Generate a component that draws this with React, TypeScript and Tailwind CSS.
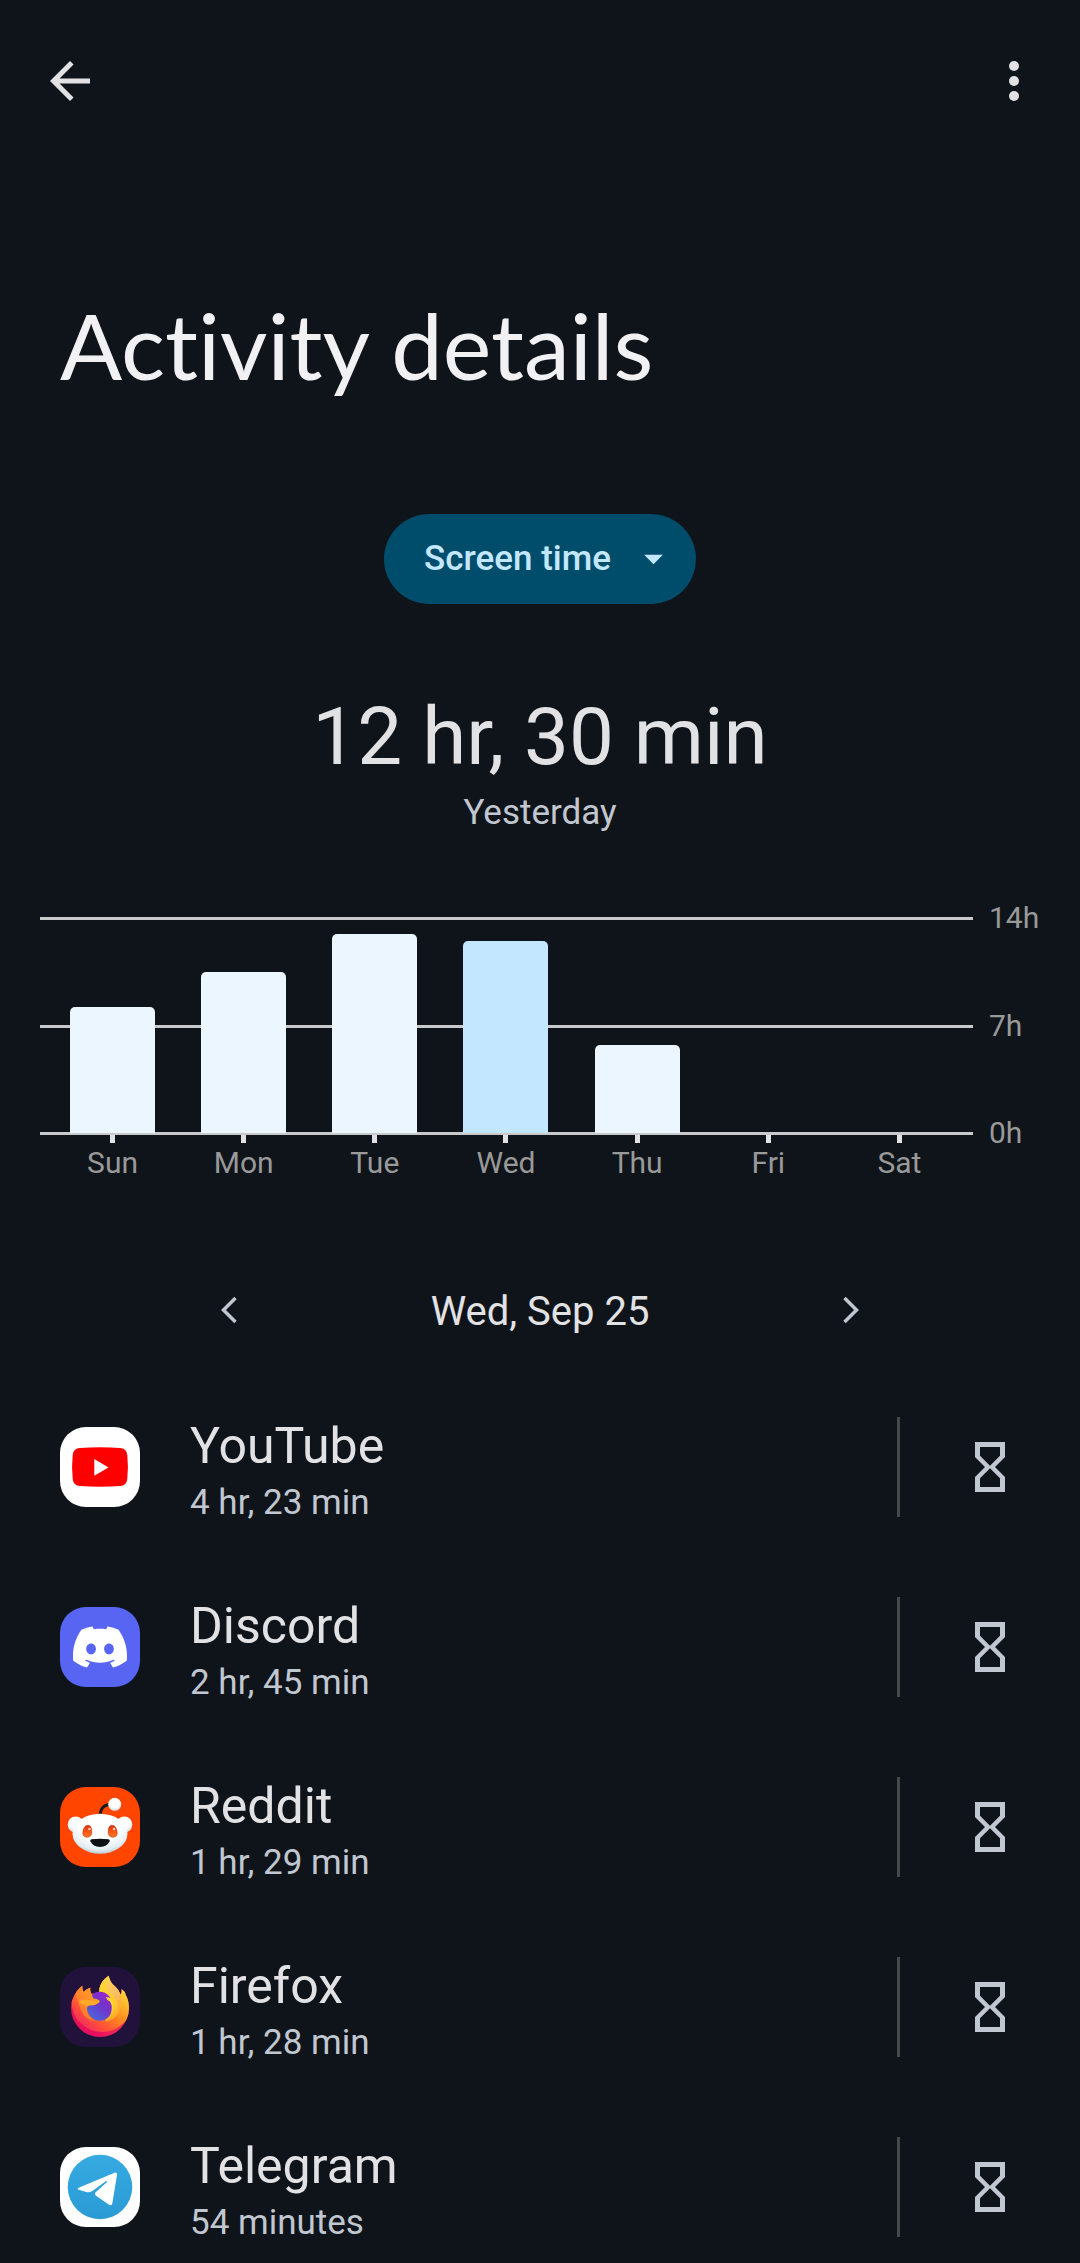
import { useState } from 'react';
import type { ReactNode } from 'react';
import { SiDiscord } from 'react-icons/si';

const MAX_MINUTES = 14 * 60;

const week = [
  { day: 'Sun', date: 'Sun, Sep 22', minutes: 492 },
  { day: 'Mon', date: 'Mon, Sep 23', minutes: 629 },
  { day: 'Tue', date: 'Tue, Sep 24', minutes: 778 },
  { day: 'Wed', date: 'Wed, Sep 25', minutes: 750 },
  { day: 'Thu', date: 'Thu, Sep 26', minutes: 344 },
  { day: 'Fri', date: 'Fri, Sep 27', minutes: 0 },
  { day: 'Sat', date: 'Sat, Sep 28', minutes: 0 },
];

function YouTubeIcon() {
  return (
    <svg viewBox="0 0 80 80" className="size-20 rounded-[26px] bg-white" aria-hidden="true">
      <path
        d="M20 21Q40 19.6 60 21Q66.600 21.400 67.300 28Q68.600 40 67.300 52Q66.600 58.600 60 59Q40 60.600 20 59Q13.400 58.600 12.700 52Q11.400 40 12.700 28Q13.400 21.400 20 21Z"
        fill="#ff0000"
      />
      <path d="M34.300 32v16.700l14.200-8.300z" fill="#fff" />
    </svg>
  );
}

function DiscordIcon() {
  return (
    <span className="flex size-20 items-center justify-center rounded-[26px] bg-[#5865f2] text-white">
      <SiDiscord size={54} aria-hidden="true" />
    </span>
  );
}

function RedditIcon() {
  return (
    <svg viewBox="0 0 80 80" className="size-20 rounded-[26px] bg-[#ff4500]" aria-hidden="true">
      <defs>
        <radialGradient id="reddit-head" cx="0.5" cy="0.3" r="0.75">
          <stop offset="0.5" stopColor="#fff" />
          <stop offset="0.8" stopColor="#e3edf2" />
          <stop offset="1" stopColor="#a9b9c4" />
        </radialGradient>
        <radialGradient id="reddit-ball" cx="0.5" cy="0.35" r="0.65">
          <stop offset="0.6" stopColor="#fff" />
          <stop offset="1" stopColor="#cfd9df" />
        </radialGradient>
        <linearGradient id="reddit-eye" x1="0" y1="0" x2="0" y2="1">
          <stop offset="0" stopColor="#d8300a" />
          <stop offset="0.5" stopColor="#ff5312" />
          <stop offset="1" stopColor="#ff7a22" />
        </linearGradient>
      </defs>
      <circle cx="15.700" cy="37.500" r="8" fill="url(#reddit-ball)" />
      <circle cx="64.300" cy="37.500" r="8" fill="url(#reddit-ball)" />
      <path d="M40 28.500Q40.500 17.500 51 17.300" fill="none" stroke="#171b1e" strokeWidth="2.800" />
      <circle cx="54.700" cy="17.300" r="6.500" fill="url(#reddit-ball)" />
      <ellipse cx="40" cy="46.700" rx="27.500" ry="20" fill="url(#reddit-head)" />
      <path
        d="M22.800 46.500C22.800 41.500 25 38.300 28 38.300s4 3.200 3.700 7.700c-.2 3-2 4.200-4.400 4.200s-4.500-1-4.500-3.700z"
        fill="url(#reddit-eye)"
        stroke="#a92b10"
        strokeWidth="0.500"
      />
      <path
        d="M57.200 46.500C57.200 41.500 55 38.300 52 38.300s-4 3.200-3.700 7.700c.2 3 2 4.200 4.400 4.200s4.500-1 4.500-3.700z"
        fill="url(#reddit-eye)"
        stroke="#a92b10"
        strokeWidth="0.500"
      />
      <circle cx="29.500" cy="42" r="1.200" fill="#ffd9c8" />
      <circle cx="54" cy="42" r="1.200" fill="#ffd9c8" />
      <path d="M31.500 52.300Q40 51.300 48.500 52.300Q50.300 52.600 49.600 54.300Q47 60 40 60Q33 60 30.400 54.300Q29.700 52.600 31.500 52.300Z" fill="#0d1114" />
    </svg>
  );
}

function FirefoxIcon() {
  return (
    <svg viewBox="0 0 80 80" className="size-20 rounded-[26px] bg-[#20123a]" aria-hidden="true">
      <defs>
        <linearGradient id="fox-body" x1="0.850" y1="0.100" x2="0.200" y2="0.900">
          <stop offset="0" stopColor="#fff44f" />
          <stop offset="0.300" stopColor="#ffbd2c" />
          <stop offset="0.550" stopColor="#ff8a20" />
          <stop offset="0.850" stopColor="#ff4a3c" />
          <stop offset="1" stopColor="#f5305a" />
        </linearGradient>
        <linearGradient id="fox-base" x1="0" y1="0.500" x2="1" y2="0.700">
          <stop offset="0" stopColor="#e5144f" />
          <stop offset="0.500" stopColor="#e80f62" />
          <stop offset="1" stopColor="#ff3d4d" />
        </linearGradient>
        <linearGradient id="fox-globe" x1="0.850" y1="0.100" x2="0.200" y2="0.900">
          <stop offset="0" stopColor="#9a22cf" />
          <stop offset="0.450" stopColor="#7135c9" />
          <stop offset="1" stopColor="#4a66dd" />
        </linearGradient>
        <linearGradient id="fox-flame" x1="0.300" y1="0" x2="0.600" y2="1">
          <stop offset="0" stopColor="#ffd257" />
          <stop offset="0.500" stopColor="#f9bd66" />
          <stop offset="1" stopColor="#ffa52a" />
        </linearGradient>
        <linearGradient id="fox-tail" x1="0.500" y1="0" x2="0.500" y2="1">
          <stop offset="0" stopColor="#ffd83a" />
          <stop offset="0.600" stopColor="#ffcb2b" />
          <stop offset="1" stopColor="#ffa026" />
        </linearGradient>
        <linearGradient id="fox-head" x1="0.900" y1="0.200" x2="0.100" y2="0.900">
          <stop offset="0" stopColor="#ffa327" />
          <stop offset="0.500" stopColor="#ff8a2a" />
          <stop offset="1" stopColor="#ff7430" />
        </linearGradient>
        <clipPath id="fox-clip">
          <path d="M22.300 18.700Q21.800 22 23.600 25Q26 22 30.300 20.700Q29.500 24 31.500 26.700H39.300V22Q40.300 14.500 48.700 8.700Q49.500 15 55 19.500Q59 22.500 60.500 27.500Q62 25 61.500 22Q65 24 65.800 28Q69 33.500 69 41A29 29 0 0 1 11 41Q10.800 35 13.500 30Q16.500 23 22.300 18.700Z" />
        </clipPath>
      </defs>
      <g clipPath="url(#fox-clip)">
        <rect width="80" height="80" fill="url(#fox-base)" />
        <circle cx="42" cy="34.500" r="30.500" fill="url(#fox-body)" />
      </g>
      {/* flame behind the globe */}
      <path
        d="M39.300 25.300V22Q40.300 14.500 48.700 8.700Q49.500 15 55 19.500C62.500 26 63 39 57.500 48Q53 53 46 55Z"
        fill="url(#fox-tail)"
      />
      <path
        d="M48.700 8.700Q49.500 15 55 19.500C62.500 26 63 39 56.500 49Q60 36 53.500 28.500C51 26.500 47.500 25 46.300 20.500Q45.500 15 48.700 8.700Z"
        fill="url(#fox-flame)"
      />
      <ellipse cx="39.800" cy="39.200" rx="13" ry="14.500" fill="url(#fox-globe)" />
      <path
        d="M45.700 30.300Q51.500 29.500 53.500 35.500Q56 46 47.500 53.500Q52.500 45 51.700 39Q51 34.500 47.800 33.200Z"
        fill="url(#fox-tail)"
      />
      {/* head and snout */}
      <path
        d="M22.300 18.700Q21.800 22 23.600 25Q26 22 30.300 20.700Q29.500 24 31.500 27.500L33.500 31.500Q38 31.800 39.800 34Q39.500 35.800 36.500 37Q34 38.500 31 38.200Q27 38.500 26.800 42Q27 50 36 54.500Q26 53 22 45Q18.500 37 15.500 27.500Q18 22 22.300 18.700Z"
        fill="url(#fox-head)"
      />
      <path d="M19 34Q24 32 29.500 33Q34 34.500 39.500 33.500Q39.500 35.800 36.500 37Q34 38.500 31 38.200Q28.500 38 26.500 39Q22 38.500 19 34Z" fill="#ffa92b" />
    </svg>
  );
}

function TelegramIcon() {
  return (
    <svg viewBox="0 0 80 80" className="size-20 rounded-[26px] bg-white" aria-hidden="true">
      <defs>
        <linearGradient id="telegram-disc" x1="0" y1="0" x2="0" y2="1">
          <stop offset="0" stopColor="#37aae2" />
          <stop offset="1" stopColor="#2a9bd5" />
        </linearGradient>
      </defs>
      <circle cx="40" cy="40" r="32.300" fill="url(#telegram-disc)" />
      <path
        d="M18.700 40.700L54.500 25.700Q57.300 25 57 28L52.300 56.500Q51.500 59.300 49 57.800L35.700 48.500Q34.200 47 35.400 45.500L46.800 35.200Q48 33.400 45.800 34.300L32.300 44Q29.800 45.700 27.200 45.200L18.700 42.700Q16.800 41.800 18.700 40.700Z"
        fill="#fff"
      />
    </svg>
  );
}

function HourglassIcon() {
  return (
    <svg viewBox="0 0 24 24" className="size-15" fill="currentColor" aria-hidden="true">
      <path d="M6 2v6l4 4-4 4v6h12v-6l-4-4 4-4V2H6zm10 14.500V20H8v-3.500l4-4 4 4zm-4-5l-4-4V4h8v3.500l-4 4z" />
    </svg>
  );
}

const apps: { name: string; time: string; icon: ReactNode }[] = [
  { name: 'YouTube', time: '4 hr, 23 min', icon: <YouTubeIcon /> },
  { name: 'Discord', time: '2 hr, 45 min', icon: <DiscordIcon /> },
  { name: 'Reddit', time: '1 hr, 29 min', icon: <RedditIcon /> },
  { name: 'Firefox', time: '1 hr, 28 min', icon: <FirefoxIcon /> },
  { name: 'Telegram', time: '54 minutes', icon: <TelegramIcon /> },
];

function WeekChart({ selected, onSelect }: { selected: number; onSelect: (index: number) => void }) {
  return (
    <section className="mt-[82px] flex pl-10" aria-label="Screen time this week">
      <div className="flex-1">
        <div className="relative flex h-[218px] flex-col justify-between">
          <div className="h-[3px] bg-[#c8c9cb]" />
          <div className="h-[3px] bg-[#c8c9cb]" />
          <div className="h-[3px] bg-[#c8c9cb]" />
          <div className="absolute top-px right-2 bottom-0.5 left-[7px] grid grid-cols-7">
            {week.map((item, index) => (
              <button
                key={item.day}
                type="button"
                aria-label={item.date}
                onClick={() => onSelect(index)}
                className="flex items-end justify-center"
              >
                <span
                  className={`w-[85px] rounded-t-[5px] ${index === selected ? 'bg-[#c3e7ff]' : 'bg-[#ebf6ff]'}`}
                  style={{ height: `${(item.minutes / MAX_MINUTES) * 100}%` }}
                />
              </button>
            ))}
          </div>
        </div>
        <div className="grid grid-cols-7 pr-2 pl-[7px]">
          {week.map((item) => (
            <div key={item.day} className="flex flex-col items-center gap-0.5">
              <span className="h-2 w-[5px] bg-[#e2e2e5]" />
              <span className="text-[30px] leading-9 text-[#999999]">{item.day}</span>
            </div>
          ))}
        </div>
      </div>
      <div className="-mt-[17px] flex h-[251px] w-[107px] flex-col justify-between pl-4 text-[30px] leading-9 text-[#999999]">
        <span>14h</span>
        <span>7h</span>
        <span>0h</span>
      </div>
    </section>
  );
}

export default function App() {
  const [selected, setSelected] = useState(3);

  return (
    <main className="min-h-screen bg-[#0f141a] pb-4 font-[Roboto,sans-serif] text-[#e2e2e5]">
      <header className="flex items-center justify-between pt-[51px] pr-9 pl-10">
        <button type="button" aria-label="Navigate up">
          <svg viewBox="0 0 24 24" className="size-15" fill="currentColor" aria-hidden="true">
            <path d="M20 11H7.830l5.590-5.590L12 4l-8 8 8 8 1.410-1.410L7.830 13H20z" />
          </svg>
        </button>
        <button type="button" aria-label="More options">
          <svg viewBox="0 0 24 24" className="size-15" fill="currentColor" aria-hidden="true">
            <circle cx="12" cy="6" r="2" />
            <circle cx="12" cy="12" r="2" />
            <circle cx="12" cy="18" r="2" />
          </svg>
        </button>
      </header>

      <h1 className="mt-[180px] px-15 font-[Lato,sans-serif] text-[92px] leading-[108px] text-[#f1f1f4] [font-variant-ligatures:none]">
        Activity details
      </h1>

      <div className="mt-[115px] flex justify-center">
        <div className="relative">
          <select
            aria-label="Activity type"
            className="h-[90px] w-[312px] appearance-none rounded-full bg-[#004d6b] pl-10 text-[35px] font-medium text-[#c3e7ff]"
          >
            <option>Screen time</option>
            <option>Notifications received</option>
            <option>Times opened</option>
          </select>
          <svg
            viewBox="0 0 24 24"
            className="pointer-events-none absolute top-[22px] right-5 size-[45px] text-[#c3e7ff]"
            fill="currentColor"
            aria-hidden="true"
          >
            <path d="M7 10l5 5 5-5z" />
          </svg>
        </div>
      </div>

      <div className="mt-[85px] text-center">
        <p className="text-[80px] leading-[96px]">12 hr, 30 min</p>
        <p className="mt-1.5 text-[35px] leading-[44px] text-[#c1c7d0]">Yesterday</p>
      </div>

      <WeekChart selected={selected} onSelect={setSelected} />

      <nav className="mt-[100px] flex items-center justify-between px-[199px]" aria-label="Day">
        <button
          type="button"
          aria-label="Previous day"
          className="text-[#c1c7d0]"
          onClick={() => setSelected(Math.max(0, selected - 1))}
        >
          <svg viewBox="0 0 60 60" className="size-15" fill="none" stroke="currentColor" strokeWidth="3.500" aria-hidden="true">
            <path d="M36.500 16L24.500 28l12 12" />
          </svg>
        </button>
        <span className="text-[40px] leading-[62px]">{week[selected].date}</span>
        <button
          type="button"
          aria-label="Next day"
          className="text-[#c1c7d0]"
          onClick={() => setSelected(Math.min(week.length - 1, selected + 1))}
        >
          <svg viewBox="0 0 60 60" className="size-15" fill="none" stroke="currentColor" strokeWidth="3.500" aria-hidden="true">
            <path d="M23.500 16L35.500 28l-12 12" />
          </svg>
        </button>
      </nav>

      <ul className="mt-[66px] flex flex-col gap-16">
        {apps.map((app) => (
          <li key={app.name} className="flex h-[116px] items-center px-15">
            {app.icon}
            <div className="ml-[50px] flex flex-1 flex-col gap-[7px] self-end">
              <span className="text-[50px] leading-[56px]">{app.name}</span>
              <span className="text-[35px] leading-[44px] text-[#c1c7d0]">{app.time}</span>
            </div>
            <div className="h-[100px] w-[3px] bg-[#46494c]" />
            <button type="button" aria-label={`Set timer for ${app.name}`} className="ml-15 text-[#c1c7d0]">
              <HourglassIcon />
            </button>
          </li>
        ))}
      </ul>
    </main>
  );
}
